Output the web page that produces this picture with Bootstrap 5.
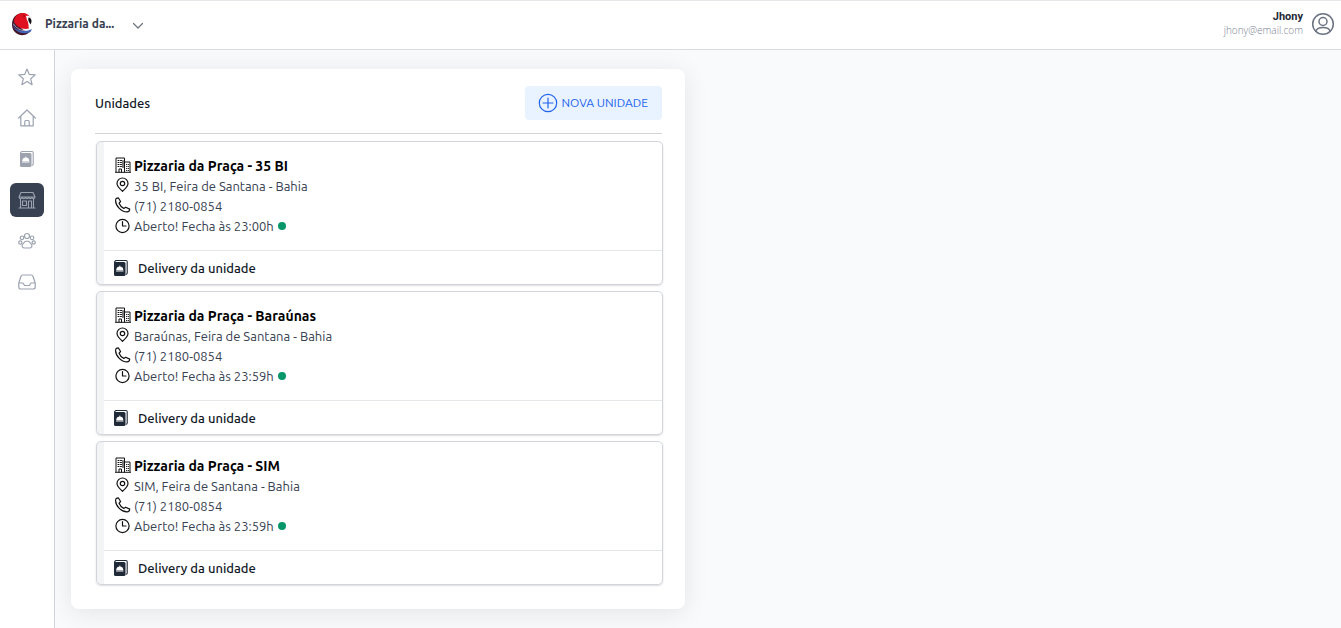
<!DOCTYPE html>
<html lang="pt-BR">
<head>
<meta charset="utf-8">
<meta name="viewport" content="width=device-width, initial-scale=1">
<title>Unidades</title>
<link href="https://cdn.jsdelivr.net/npm/bootstrap@5.3.0/dist/css/bootstrap.min.css" rel="stylesheet">
<style>
body{font-family:Ubuntu,"Noto Sans",sans-serif;font-size:13px;line-height:20px;background:#f9fafb;color:#374151}
svg{display:block;flex:none;fill:none;stroke:currentColor;stroke-linecap:round;stroke-linejoin:round}
.topbar{height:50px;background:#fff;border-top:1px solid #e5e7eb;border-bottom:1px solid #d9dce2;padding:0 6px 3px 10px}
.brand-btn{font-size:12px;color:#374151;line-height:20px;gap:11px}
.brand-btn span{margin-right:7px}
.brand-logo{stroke:none}
.muted-icon{color:#6b7280}
.user-name{font:bold 11px/14px Roboto,sans-serif;color:#1f2937}
.user-mail{font:300 10px/13px "Open Sans",sans-serif;color:#7b8494}
.side{width:55px;background:#fff;border-right:1px solid #d1d5db;padding-top:10px;gap:7px}
.side a{width:34px;height:34px;border-radius:6px;color:#9ca3af}
.side a.active{background:#374151}
.panel{background:#fff;border-radius:8px;padding:17px 23px 24px 24px;box-shadow:0 4px 26px rgba(0,0,0,.09)}
.main-area{padding:19px 13px 19px 16px}
.panel-head{padding-bottom:13px;border-bottom:1px solid #d1d5db;margin-bottom:7px}
.panel h1{font-size:13px;line-height:20px;font-weight:500;color:#111827}
.new-btn{height:34px;background:#e8f3ff;color:#2563eb;border-radius:4px;font-size:12px;font-weight:400;padding:0 14px 0 13px;gap:4px;--bs-btn-hover-color:#1d4ed8}
.unit-list{gap:6px;margin-left:1px;margin-right:-1px}
.unit{border:1px solid #d1d5db;border-radius:5px;background:linear-gradient(90deg,#f3f4f6 7px,#fff 7px);box-shadow:0 1px 2px rgba(0,0,0,.14)}
.unit-body{padding:14px 18px;height:108px}
.unit-line{gap:4px;height:20px}
.unit-line svg{margin-bottom:3px;color:#111}
.unit-line h2{font-size:14px;line-height:20px;font-weight:700;color:#000}
.unit-line h2,.unit-line span:not(.dot){margin-left:-1px}
.dot{width:8px;height:8px;border-radius:50%;background:#059669}
.unit-foot{margin-left:7px;border-top:1px solid #e5e7eb;height:34px;padding-left:9px;gap:9px;color:#111827;font-weight:500}
.unit-foot svg{color:#1f2937}
</style>
</head>
<body class="d-flex flex-column min-vh-100">
<svg class="d-none" aria-hidden="true">
<symbol id="book" viewBox="0 0 16 18"><path d="M3 1.500h10q1.200 0 1.200 1.200V14q0 1-1 1.200" stroke-width="1.100"/><rect x="1" y="3" width="11.500" height="14" rx="1.500" fill="currentColor" stroke="none"/><path d="M3.500 1.500Q1.500 1.500 1.500 4" stroke-width="1.100"/><path d="M3.500 11a3.300 3.300 0 0 1 6.600 0zM3.500 12.300h6.600M6.800 6.800v1" fill="#fff" stroke="#fff" stroke-width=".6"/></symbol>
<symbol id="building" viewBox="0 0 16 16"><path d="M1 15V1h8.500v14M9.500 5H15v10M.5 15.300h15M4 15v-3h2.500v3" stroke-width="1"/><path d="M3 3.500h1m1.500 0h1M3 5.500h1m1.500 0h1M3 7.500h1m1.500 0h1M3 9.500h1m1.500 0h1M8 3.500v7M11.500 7.500h.3m1.500 0h.2M11.500 9.500h.3m1.500 0h.2M11.500 11.500h.3m1.500 0h.2M11.500 13.500h.3m1.500 0h.2" stroke-width="1.100"/></symbol>
<symbol id="pin" viewBox="0 0 16 16"><path d="M7.500 14.300C5.500 12.300 2 9.800 2 6.500a5.500 5.500 0 0 1 11 0C13 9.800 9.500 12.300 7.500 14.300z" stroke-width="1.200"/><circle cx="7.500" cy="6.500" r="2.200" stroke-width="1.200"/></symbol>
<symbol id="phone" viewBox="0 0 16 16"><path d="M1.500 1.300 3.300.8l2.300 3.700-1.500 1.700c.8 2.200 2.300 4 4.700 5.200l1.900-1.200 4 1.900c.1 1.500-.9 2.700-2.600 2.800C6 15 .6 8.500.6 3.400.6 2.400.8 1.700 1.500 1.300z" stroke-width="1.200"/></symbol>
<symbol id="clock" viewBox="0 0 16 16"><circle cx="7.500" cy="8" r="6.600" stroke-width="1.200"/><path d="M7.500 3.500V8H11" stroke-width="1.200"/></symbol>
</svg>

<header class="topbar d-flex align-items-center justify-content-between">
  <button type="button" class="brand-btn btn p-0 border-0 d-flex align-items-center">
    <svg class="brand-logo" width="24" height="24" viewBox="0 0 24 24"><path d="M13 1C6 1 2 6 2 12.500 2 19 7 24 14 23c3-.5 5-2 6-4-6 1-10-3-12-8z" fill="#43162a"/><path d="M3 10c0 7 8 12 19 7l-1.500 3C11 24 2 18 3 10z" fill="#4263b5"/><path d="M13 1C7 1 4 5 4 10c3 5 8 8 15 6.500-1-2 0-4-1-6l3-4c-2-4-5-5.500-8-5.500z" fill="#df1020"/><path d="M16 4c3-1 5 1 5.500 3.500L19 12l-2-4z" fill="#fff"/><path d="M18.500 5.500c3 0 4 4 2 7-.5-2-3-3-2-7z" fill="#111"/><path d="M3.500 12c4 6 10 8 16 5.500" fill="none" stroke="#cbd8f4" stroke-width=".7"/><circle cx="14" cy="4" r=".8" fill="#611"/></svg>
    <span class="fw-semibold">Pizzaria da...</span>
    <svg width="12" height="8" viewBox="0 0 12 8" class="muted-icon mt-1"><path d="m1.500 1.500 4.500 4.500 4.500-4.500" stroke-width="1.200"/></svg>
  </button>
  <div class="d-flex align-items-center gap-2">
    <div class="text-end"><div class="user-name">Jhony</div><div class="user-mail">jhony@email.com</div></div>
    <svg class="muted-icon" width="24" height="24" viewBox="0 0 24 24" stroke-width="1.500"><circle cx="12" cy="12" r="10.300"/><circle cx="12" cy="9.500" r="4"/><path d="M4.800 19.300c1-3 3.700-3.800 7.200-3.800s6.200.8 7.200 3.800"/></svg>
  </div>
</header>

<div class="d-flex flex-grow-1">
  <nav class="side d-flex flex-column align-items-center flex-shrink-0">
    <a href="#" aria-label="Favoritos" class="d-flex align-items-center justify-content-center"><svg width="18" height="18" viewBox="0 0 18 18" stroke-width="1.200"><path d="m9 1 2.300 5.400 5.900.5-4.500 3.900 1.400 5.900L9 13.500l-5.100 3.200 1.400-5.900L.8 6.900l5.900-.5z"/></svg></a>
    <a href="#" aria-label="Início" class="d-flex align-items-center justify-content-center"><svg width="18" height="18" viewBox="0 0 18 18" stroke-width="1.200"><path d="M.7 9 9 1l8.300 8M2.800 7.500v9.300h12.400V7.500M6.800 16.500v-4q0-1 1-1h2.400q1 0 1 1v4"/></svg></a>
    <a href="#" aria-label="Cardápio" class="d-flex align-items-center justify-content-center"><svg width="16" height="18"><use href="#book"/></svg></a>
    <a href="#" aria-label="Unidades" aria-current="page" class="active d-flex align-items-center justify-content-center"><svg width="18" height="18" viewBox="0 0 18 18" stroke-width="1.100"><path d="M3 1.500h12l2 4.500c0 2-2.500 2-3.200.5-.8 1.500-2.500 1.500-3.200 0-.7 1.500-2.500 1.500-3.200 0-.8 1.500-2.500 1.500-3.200 0C3.500 8 1 8 1 6zM1.500 6h15M2.500 8v9M15.500 8v9M1 17h16M4.500 10h4v4.500h-4zM10.500 17v-7h3v7"/></svg></a>
    <a href="#" aria-label="Clientes" class="d-flex align-items-center justify-content-center"><svg width="18" height="18" viewBox="0 0 18 18" stroke-width="1.200"><circle cx="9" cy="4" r="2.500"/><circle cx="4" cy="5.800" r="1.800"/><circle cx="14" cy="5.800" r="1.800"/><circle cx="2.300" cy="10.500" r="1.600"/><circle cx="15.700" cy="10.500" r="1.600"/><path d="M9 9c-2.500 0-3.500 2-4.500 3.500-1.200 2 .2 3.500 2 3.500h5c1.800 0 3.200-1.500 2-3.500C12.500 11 11.500 9 9 9z"/></svg></a>
    <a href="#" aria-label="Caixa de entrada" class="d-flex align-items-center justify-content-center"><svg width="18" height="18" viewBox="0 0 18 18" stroke-width="1.200"><path d="M.8 10 3 3.200q.4-1.200 1.600-1.200h8.800q1.200 0 1.600 1.200L17.200 10v4q0 2-2 2H2.800q-2 0-2-2zM1 10h4l1.500 2.500h5L13 10h4"/></svg></a>
  </nav>

  <main class="flex-grow-1">
    <div class="row g-0">
      <div class="col-12 col-lg-6 main-area">
        <section class="panel">
          <div class="panel-head d-flex align-items-center justify-content-between">
            <h1 class="mb-0">Unidades</h1>
            <button type="button" class="new-btn btn border-0 d-flex align-items-center"><svg width="20" height="20" viewBox="0 0 20 20" stroke-width="1.200"><circle cx="10" cy="10" r="8.700"/><path d="M10 5v10M5 10h10"/></svg>NOVA UNIDADE</button>
          </div>
          <div class="unit-list d-flex flex-column">
            <article class="unit">
              <div class="unit-body">
                <div class="unit-line d-flex align-items-center"><svg width="16" height="16"><use href="#building"/></svg><h2 class="mb-0">Pizzaria da Praça - 35 BI</h2></div>
                <div class="unit-line d-flex align-items-center"><svg width="16" height="16"><use href="#pin"/></svg><span>35 BI, Feira de Santana - Bahia</span></div>
                <div class="unit-line d-flex align-items-center"><svg width="16" height="16"><use href="#phone"/></svg><span>(71) 2180-0854</span></div>
                <div class="unit-line d-flex align-items-center"><svg class="mb-0" width="16" height="16"><use href="#clock"/></svg><span>Aberto! Fecha às 23:00h</span><span class="dot"></span></div>
              </div>
              <div class="unit-foot d-flex align-items-center"><svg width="16" height="18"><use href="#book"/></svg><span>Delivery da unidade</span></div>
            </article>
            <article class="unit">
              <div class="unit-body">
                <div class="unit-line d-flex align-items-center"><svg width="16" height="16"><use href="#building"/></svg><h2 class="mb-0">Pizzaria da Praça - Baraúnas</h2></div>
                <div class="unit-line d-flex align-items-center"><svg width="16" height="16"><use href="#pin"/></svg><span>Baraúnas, Feira de Santana - Bahia</span></div>
                <div class="unit-line d-flex align-items-center"><svg width="16" height="16"><use href="#phone"/></svg><span>(71) 2180-0854</span></div>
                <div class="unit-line d-flex align-items-center"><svg class="mb-0" width="16" height="16"><use href="#clock"/></svg><span>Aberto! Fecha às 23:59h</span><span class="dot"></span></div>
              </div>
              <div class="unit-foot d-flex align-items-center"><svg width="16" height="18"><use href="#book"/></svg><span>Delivery da unidade</span></div>
            </article>
            <article class="unit">
              <div class="unit-body">
                <div class="unit-line d-flex align-items-center"><svg width="16" height="16"><use href="#building"/></svg><h2 class="mb-0">Pizzaria da Praça - SIM</h2></div>
                <div class="unit-line d-flex align-items-center"><svg width="16" height="16"><use href="#pin"/></svg><span>SIM, Feira de Santana - Bahia</span></div>
                <div class="unit-line d-flex align-items-center"><svg width="16" height="16"><use href="#phone"/></svg><span>(71) 2180-0854</span></div>
                <div class="unit-line d-flex align-items-center"><svg class="mb-0" width="16" height="16"><use href="#clock"/></svg><span>Aberto! Fecha às 23:59h</span><span class="dot"></span></div>
              </div>
              <div class="unit-foot d-flex align-items-center"><svg width="16" height="18"><use href="#book"/></svg><span>Delivery da unidade</span></div>
            </article>
          </div>
        </section>
      </div>
    </div>
  </main>
</div>
<script src="https://cdn.jsdelivr.net/npm/bootstrap@5.3.0/dist/js/bootstrap.bundle.min.js"></script>
</body>
</html>
